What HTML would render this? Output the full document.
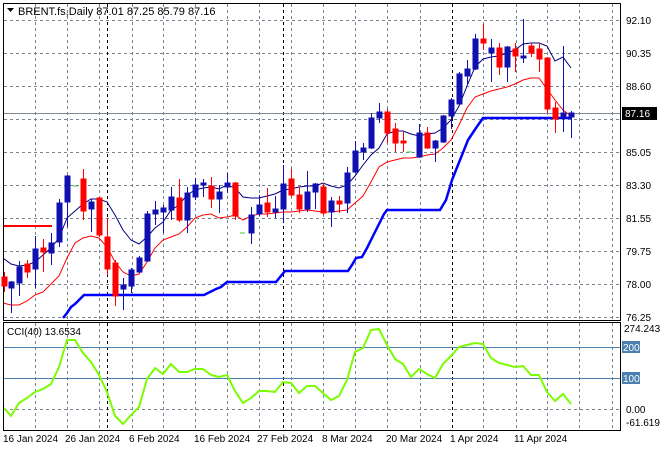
<!DOCTYPE html>
<html><head><meta charset="utf-8"><style>
html,body{margin:0;padding:0;background:#fff;}
svg{display:block;font-family:"Liberation Sans",sans-serif;}
</style></head><body>
<svg width="660" height="450" viewBox="0 0 660 450" xmlns="http://www.w3.org/2000/svg">
<rect width="660" height="450" fill="#fff"/>
<!-- grid main -->
<g stroke="#7a8490" stroke-width="1" stroke-dasharray="3,3" fill="none">
<path d="M4 20.5H620M4 53.5H620M4 86.5H620M4 119.5H620M4 152.5H620M4 185.5H620M4 218.5H620M4 251.5H620M4 284.5H620M4 317.5H620"/>
<path d="M35.5 4V320M67.5 4V320M99.5 4V320M132.5 4V320M163.5 4V320M195.5 4V320M227.5 4V320M259.5 4V320M291.5 4V320M323.5 4V320M355.5 4V320M387.5 4V320M420.5 4V320M483.5 4V320M516.5 4V320M547.5 4V320M579.5 4V320M612.5 4V320"/>
<path d="M35.5 323V430M67.5 323V430M99.5 323V430M132.5 323V430M163.5 323V430M195.5 323V430M227.5 323V430M259.5 323V430M291.5 323V430M323.5 323V430M355.5 323V430M387.5 323V430M420.5 323V430M483.5 323V430M516.5 323V430M547.5 323V430M579.5 323V430M612.5 323V430"/>
<path d="M4 409.5H620"/>
</g>
<g stroke="#000" stroke-width="1" stroke-dasharray="3,3" fill="none">
<path d="M107.5 4V320M283.5 4V320M452.5 4V320M107.5 323V430M283.5 323V430M452.5 323V430"/>
</g>
<!-- current price line -->
<path d="M4 113.5H620" stroke="#808890" stroke-width="1"/>
<!-- red stub -->
<path d="M4 226H52" stroke="#ff0000" stroke-width="2"/>
<!-- thick blue line -->
<polyline fill="none" stroke="#0000ff" stroke-width="2.5" points="63,318 67,313 71,307 75,304 79,300 84,295 204,295 210,292 216,289 221,287 227,282 276,282 285,271 348,271 352,265 356,258 362,257 367,248 372,238 378,226 384,214 387,210 440,210 446,200 452,180 460,160 468,140 476,128 483,118 571,118"/>
<!-- navy MA -->
<polyline fill="none" stroke="#000080" stroke-width="1" points="3,258 11,264 19,266 27,265 35,262 43,255 51,248 59,238 67,218 75,211 83,204 91,199 99,199 107,202 115,215 123,230 131,240 139,244 147,237 155,228 163,222 171,210 179,205 187,195 195,190 203,188 211,187 219,189 227,185 235,188 243,197 251,198 259,198 267,196 275,194 283,190 291,189 299,187 307,186 315,186 323,183 331,186 339,188 347,185 355,176 363,165 371,155 379,148 387,134 395,131 403,131 411,134 419,136 427,134 435,133 443,128 451,120 459,106 467,86 475,67 483,59 491,57 499,56 507,53 515,50 523,44 531,43 539,43 547,46 555,61 563,57 571,68"/>
<!-- red MA -->
<polyline fill="none" stroke="#ff0000" stroke-width="1" points="3,303 11,305 19,305 27,301 35,295 43,292 51,284 59,276 67,258 75,243 83,238 91,236 99,238 107,247 115,262 123,272 131,276 139,274 147,262 155,248 163,240 171,237 179,234 187,227 195,218 203,215 211,214 219,218 227,217 235,215 243,220 251,216 259,214 267,214 275,213 283,212 291,212 299,211 307,210 315,211 323,212 331,212 339,211 347,210 355,203 363,196 371,182 379,167 387,162 395,160 403,158 411,158 419,157 427,155 435,154 443,148 451,140 459,125 467,108 475,97 483,94 491,91 499,89 507,87 515,84 523,80 531,78 539,78 547,89 555,100 563,110 571,116"/>
<!-- green dashes -->
<path d="M73 186H78M240 233H245M407 152H412" stroke="#32cd32" stroke-width="1"/>
<!-- candles -->
<g id="c"></g>
<!-- CCI levels -->
<path d="M4 347.5H620M4 378.5H620" stroke="#4a7fb0" stroke-width="1"/>
<polyline fill="none" stroke="#7cfc00" stroke-width="2" points="4,408 11,416 19,403 27,398 35,392 43,389 51,384 59,367 67,340 75,340 83,353 91,362 99,375 107,392 115,416 123,424 131,415 139,407 147,379 155,368 163,374 171,364 179,372 187,372 195,369 203,369 211,375 219,377 227,375 235,391 243,403 251,398 259,391 267,391 275,392 283,382 291,383 299,393 307,386 315,386 323,393 331,400 339,396 347,380 355,352 363,348 371,330 379,329 387,345 395,359 403,364 411,377 419,369 427,374 435,378 443,364 451,356 459,347 467,345 475,343 483,344 491,358 499,363 507,365 515,367 523,366 531,375 539,375 547,392 555,401 563,394 571,404"/>
<!-- frames -->
<rect x="3.5" y="3.5" width="617" height="317" fill="none" stroke="#000"/>
<rect x="3.5" y="322.5" width="617" height="108" fill="none" stroke="#000"/>
<!-- title -->
<path d="M7 8L14 8L10.5 12Z" fill="#000"/>
<text x="18" y="15" font-size="11" fill="#000">BRENT.fs,Daily  87.01 87.25 85.79 87.16</text>
<text x="7" y="335" font-size="10" fill="#000">CCI(40) 13.6534</text>
<!-- price axis -->
<g font-size="10" fill="#000">
<text x="626" y="24">92.10</text>
<text x="626" y="57">90.35</text>
<text x="626" y="90">88.60</text>
<text x="626" y="156">85.05</text>
<text x="626" y="189">83.30</text>
<text x="626" y="222">81.55</text>
<text x="626" y="255">79.75</text>
<text x="626" y="288">78.00</text>
<text x="626" y="321">76.25</text>
<text x="624" y="332">274.2435</text>
<text x="626" y="413">0.00</text>
<text x="626" y="426">-61.619</text>
</g>
<rect x="622" y="107" width="35" height="13" fill="#000"/>
<text x="625" y="117" font-size="10" fill="#fff">87.16</text>
<rect x="622" y="341" width="18" height="12" fill="#4a7fb0"/>
<text x="623" y="351" font-size="10" fill="#fff">200</text>
<rect x="622" y="372" width="18" height="12" fill="#4a7fb0"/>
<text x="623" y="382" font-size="10" fill="#fff">100</text>
<!-- dates -->
<g font-size="10" fill="#000">
<text x="3" y="442">16 Jan 2024</text>
<text x="65" y="442">26 Jan 2024</text>
<text x="129" y="442">6 Feb 2024</text>
<text x="194" y="442">16 Feb 2024</text>
<text x="257" y="442">27 Feb 2024</text>
<text x="322" y="442">8 Mar 2024</text>
<text x="386" y="442">20 Mar 2024</text>
<text x="450" y="442">1 Apr 2024</text>
<text x="514" y="442">11 Apr 2024</text>
</g>
<g fill="#0c0cb0" stroke="#0c0cb0">
</g>
<!-- candles explicit -->
<g stroke-width="1">
<!-- x, bodyTop, bodyBot, high, low -->
<g stroke="#1010b0" fill="#1010b0">
<path d="M11.5 281V313M19.5 261V296M35.5 236V288M51.5 233V265M59.5 199V247M67.5 175V227M91.5 199V232M123.5 278V310M131.5 268V293M139.5 256V273M147.5 211V262M155.5 201V225M163.5 205V233M171.5 187V220M187.5 187V233M195.5 178V200M203.5 179V197M219.5 185V213M227.5 173V193M251.5 207V244M259.5 195V216M275.5 196V218M283.5 165V222M307.5 171V212M315.5 183V209M331.5 197V227M347.5 167V213M355.5 141V173M363.5 143V160M371.5 113V149M379.5 103V123M419.5 124V158M435.5 140V162M443.5 115V143M451.5 98V129M459.5 72V105M467.5 60V84M475.5 34V70M491.5 39V82M507.5 46V82M523.5 19V63M563.5 46V132M571.5 111V138"/>
<rect x="9" y="282" width="5" height="6"/><rect x="17" y="267" width="5" height="16"/><rect x="33" y="249" width="5" height="20"/><rect x="49" y="243" width="5" height="10"/><rect x="57" y="203" width="5" height="39"/><rect x="65" y="176" width="5" height="26"/><rect x="89" y="202" width="5" height="7"/><rect x="121" y="285" width="5" height="4"/><rect x="129" y="270" width="5" height="16"/><rect x="137" y="258" width="5" height="14"/><rect x="145" y="214" width="5" height="47"/><rect x="153" y="210" width="5" height="4"/><rect x="161" y="208" width="5" height="4"/><rect x="169" y="197" width="5" height="13"/><rect x="185" y="193" width="5" height="27"/><rect x="193" y="185" width="5" height="12"/><rect x="201" y="183" width="5" height="2"/><rect x="217" y="192" width="5" height="7"/><rect x="225" y="183" width="5" height="4"/><rect x="249" y="215" width="5" height="18"/><rect x="257" y="205" width="5" height="9"/><rect x="273" y="209" width="5" height="3"/><rect x="281" y="184" width="5" height="25"/><rect x="305" y="192" width="5" height="17"/><rect x="313" y="184" width="5" height="8"/><rect x="329" y="201" width="5" height="11"/><rect x="345" y="173" width="5" height="30"/><rect x="353" y="151" width="5" height="21"/><rect x="361" y="148" width="5" height="4"/><rect x="369" y="118" width="5" height="30"/><rect x="377" y="112" width="5" height="6"/><rect x="417" y="133" width="5" height="24"/><rect x="433" y="141" width="5" height="7"/><rect x="441" y="116" width="5" height="26"/><rect x="449" y="100" width="5" height="16"/><rect x="457" y="74" width="5" height="30"/><rect x="465" y="69" width="5" height="7"/><rect x="473" y="39" width="5" height="30"/><rect x="489" y="48" width="5" height="5"/><rect x="505" y="47" width="5" height="20"/><rect x="521" y="56" width="5" height="2"/><rect x="561" y="113" width="5" height="4"/><rect x="569" y="113" width="5" height="4"/>
</g>
<g stroke="#ff0000" fill="#ff0000">
<path d="M4.5 272V292M27.5 260V278M43.5 239V272M83.5 169V220M99.5 197V237M107.5 218V275M115.5 260V306M179.5 179V222M211.5 177V208M235.5 182V220M267.5 188V217M291.5 169V197M299.5 187V213M323.5 183V215M339.5 196V213M387.5 109V143M395.5 123V152M403.5 132V152M427.5 127V149M483.5 24V50M499.5 43V75M515.5 43V72M531.5 43V57M539.5 43V72M547.5 57V113M555.5 102V133"/>
<rect x="2" y="277" width="5" height="9"/><rect x="25" y="264" width="5" height="8"/><rect x="41" y="248" width="5" height="4"/><rect x="81" y="179" width="5" height="32"/><rect x="97" y="198" width="5" height="37"/><rect x="105" y="237" width="5" height="32"/><rect x="113" y="263" width="5" height="33"/><rect x="177" y="198" width="5" height="22"/><rect x="209" y="186" width="5" height="13"/><rect x="233" y="183" width="5" height="33"/><rect x="265" y="203" width="5" height="9"/><rect x="289" y="179" width="5" height="16"/><rect x="297" y="195" width="5" height="14"/><rect x="321" y="187" width="5" height="26"/><rect x="337" y="201" width="5" height="3"/><rect x="385" y="112" width="5" height="21"/><rect x="393" y="129" width="5" height="14"/><rect x="401" y="141" width="5" height="2"/><rect x="425" y="133" width="5" height="15"/><rect x="481" y="39" width="5" height="4"/><rect x="497" y="48" width="5" height="19"/><rect x="513" y="49" width="5" height="7"/><rect x="529" y="46" width="5" height="7"/><rect x="537" y="49" width="5" height="10"/><rect x="545" y="58" width="5" height="51"/><rect x="553" y="108" width="5" height="11"/>
</g>
</g>
</svg>
</body></html>
